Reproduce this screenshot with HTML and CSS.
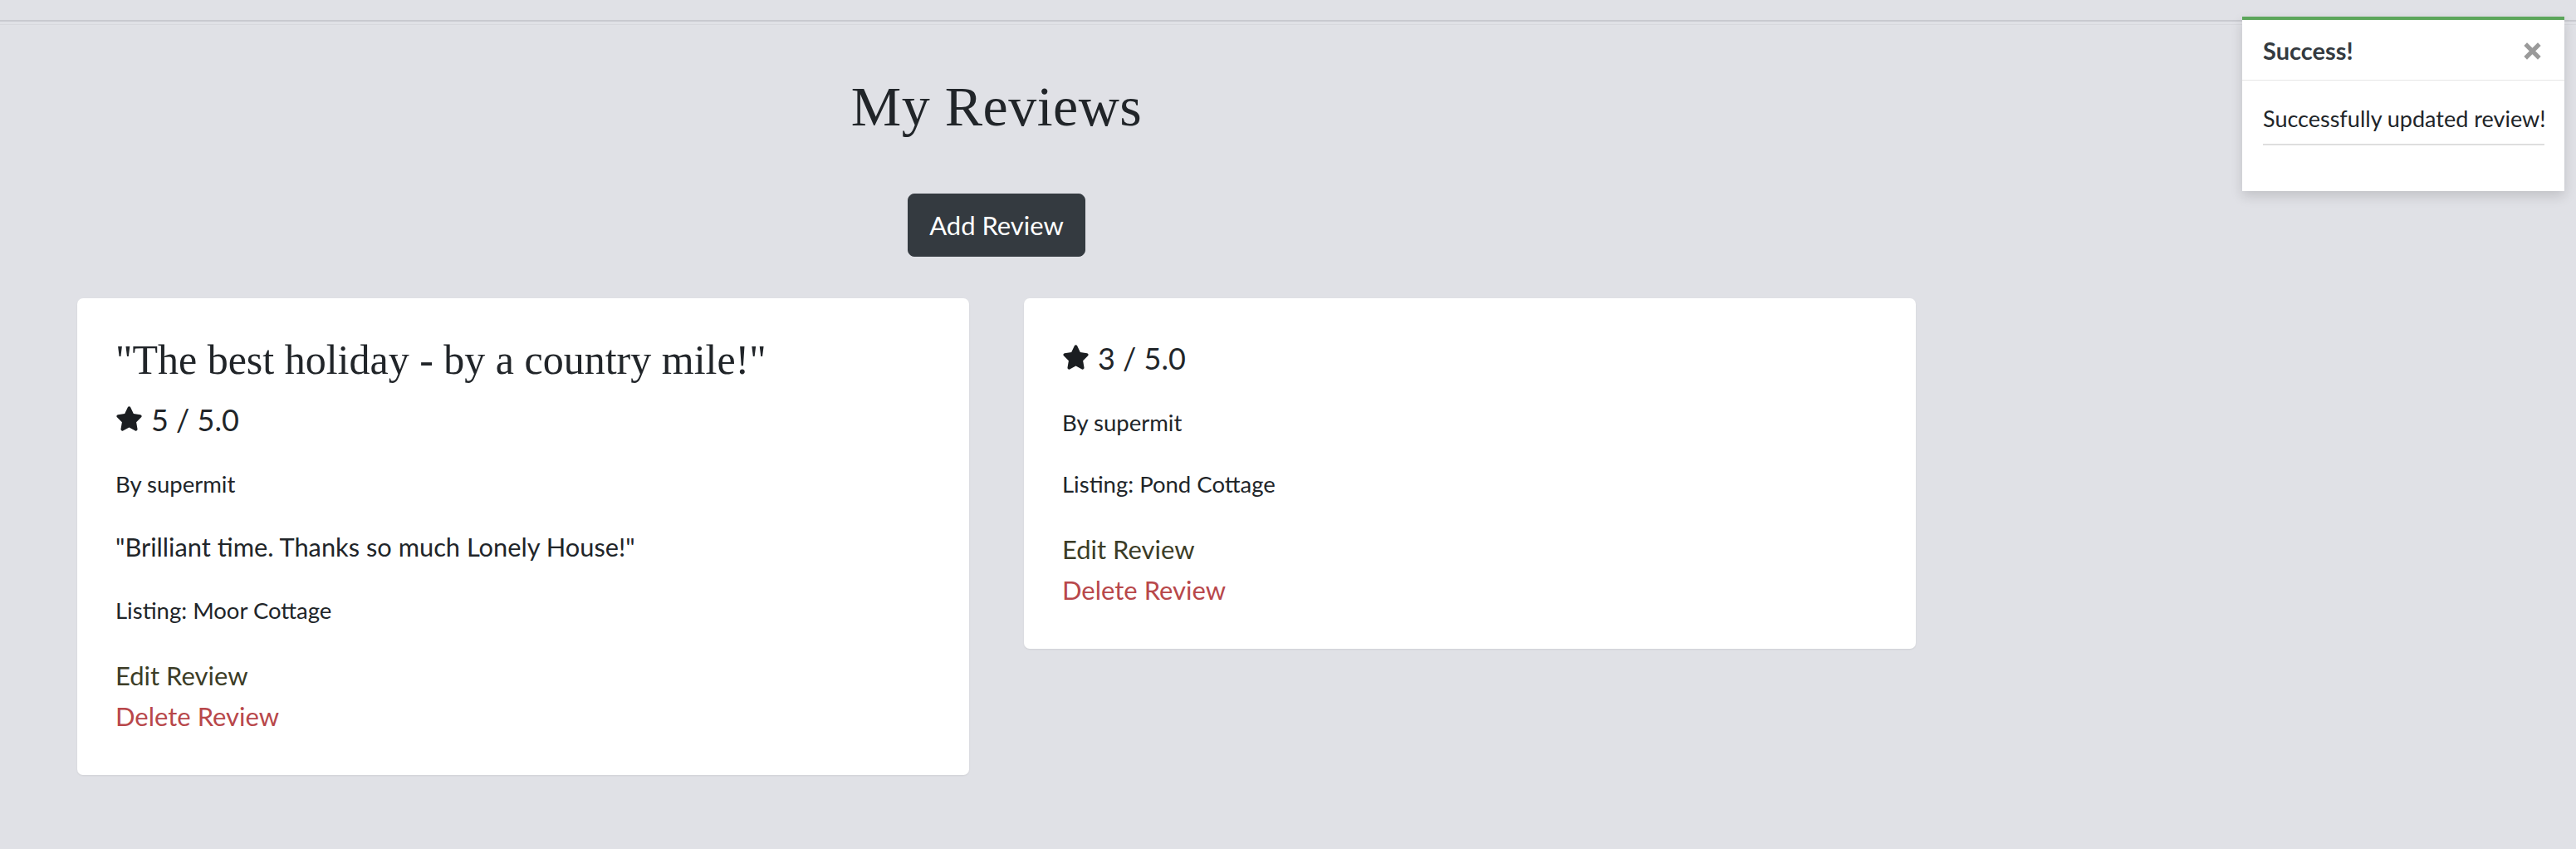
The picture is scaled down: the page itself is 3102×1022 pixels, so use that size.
FILE: index.html
```html
<!DOCTYPE html>
<html lang="en">
<head>
<meta charset="utf-8">
<title>My Reviews</title>
<link rel="stylesheet" href="styles.css">
</head>
<body>
<div class="topbar"></div>
<div class="topline"></div>

<main class="main">
  <h1 class="page-title">My Reviews</h1>
  <div class="actions">
    <a class="btn-dark" href="#">Add Review</a>
  </div>

  <div class="cards">
    <article class="card">
      <h4 class="card-title">"The best holiday - by a country mile!"</h4>
      <div class="rating">
        <svg class="star" viewBox="0 0 576 512" aria-hidden="true"><path d="M316.9 18C311.6 7 300.4 0 288.1 0s-23.4 7-28.8 18L195 150.3 51.4 171.5c-12 1.8-22 10.2-25.7 21.7s-.7 24.2 7.9 32.7L137.8 329 113.2 474.7c-2 12 3 24.2 12.9 31.3s23 8 33.8 2.3l128.3-68.5 128.3 68.5c10.8 5.7 23.9 4.9 33.8-2.3s14.9-19.3 12.9-31.3L438.5 329 542.7 225.9c8.6-8.5 11.7-21.2 7.9-32.7s-13.7-19.9-25.7-21.7L381.2 150.3 316.9 18z"/></svg>
        <span>5 / 5.0</span>
      </div>
      <p class="meta">By supermit</p>
      <p class="quote">"Brilliant time. Thanks so much Lonely House!"</p>
      <p class="meta">Listing: Moor Cottage</p>
      <div class="links">
        <a class="edit" href="#">Edit Review</a>
        <a class="delete" href="#">Delete Review</a>
      </div>
    </article>

    <article class="card">
      <div class="rating">
        <svg class="star" viewBox="0 0 576 512" aria-hidden="true"><path d="M316.9 18C311.6 7 300.4 0 288.1 0s-23.4 7-28.8 18L195 150.3 51.4 171.5c-12 1.8-22 10.2-25.7 21.7s-.7 24.2 7.9 32.7L137.8 329 113.2 474.7c-2 12 3 24.2 12.9 31.3s23 8 33.8 2.3l128.3-68.5 128.3 68.5c10.8 5.7 23.9 4.9 33.8-2.3s14.9-19.3 12.9-31.3L438.5 329 542.7 225.9c8.6-8.5 11.7-21.2 7.9-32.7s-13.7-19.9-25.7-21.7L381.2 150.3 316.9 18z"/></svg>
        <span>3 / 5.0</span>
      </div>
      <p class="meta">By supermit</p>
      <p class="meta">Listing: Pond Cottage</p>
      <div class="links">
        <a class="edit" href="#">Edit Review</a>
        <a class="delete" href="#">Delete Review</a>
      </div>
    </article>
  </div>
</main>

<div class="toast">
  <div class="toast-header">
    <strong>Success!</strong>
    <svg class="close" viewBox="0 0 24 24" aria-hidden="true"><path d="M4 4L20 20M20 4L4 20"/></svg>
  </div>
  <div class="toast-body">
    <p class="toast-text">Successfully updated review!</p>
    <div class="toast-rule"></div>
  </div>
</div>
</body>
</html>
```

FILE: styles.css
```css
html, body {
  margin: 0;
  padding: 0;
}
body {
  background: #e0e1e6;
  color: #212529;
  font-family: Lato, "Noto Sans", sans-serif;
  width: 3102px;
  min-height: 1022px;
  position: relative;
}

.topbar {
  height: 24px;
  border-bottom: 2px solid #c9cad0;
}
.topline {
  height: 1px;
  margin-top: 3px;
  background: #d7d8dd;
}

.main {
  width: 2400px;
}

.page-title {
  margin: 57px 0 0;
  font-family: "Liberation Serif", serif;
  font-weight: 400;
  font-size: 68px;
  line-height: 82px;
  text-align: center;
  letter-spacing: 0.5px;
  color: #212529;
}

.actions {
  display: flex;
  justify-content: center;
  margin-top: 64px;
}
.btn-dark {
  display: inline-block;
  background: #343a40;
  color: #fff;
  text-decoration: none;
  font-size: 31px;
  line-height: 48px;
  padding: 13px 0;
  border: 1px solid #343a40;
  border-radius: 8px;
  width: 212px;
  text-align: center;
  white-space: nowrap;
}

.cards {
  display: flex;
  align-items: flex-start;
  justify-content: center;
  gap: 66px;
  margin-top: 50px;
}
.card {
  width: 1074px;
  box-sizing: border-box;
  background: #fff;
  border-radius: 7px;
  box-shadow: 0 1px 2px rgba(0, 0, 0, 0.08);
  padding: 44px 46px 46px;
}

.card-title {
  margin: 0 0 14px;
  font-family: "Liberation Serif", serif;
  font-weight: 400;
  font-size: 50px;
  line-height: 60px;
  color: #212529;
}

.rating {
  display: flex;
  align-items: center;
  gap: 10px;
  font-size: 36px;
  line-height: 56px;
}
.star {
  width: 33px;
  height: 30px;
  fill: #1b1e21;
  margin-top: -3px;
}

.meta {
  margin: 30px 0 34px;
  font-size: 27.5px;
  line-height: 40px;
}
.meta + .meta,
.quote + .meta {
  margin-top: 0;
}
.quote {
  margin: 0 0 34px;
  font-size: 30.8px;
  line-height: 44px;
}

.links {
  display: flex;
  flex-direction: column;
  align-items: flex-start;
}
.links a {
  font-size: 31px;
  line-height: 49px;
  text-decoration: none;
}
.edit {
  color: #3c3d27;
}
.delete {
  color: #b8474a;
}

.toast {
  position: absolute;
  top: 20px;
  right: 14px;
  width: 388px;
  height: 210px;
  box-sizing: border-box;
  background: #fff;
  border-top: 4px solid #5ba55a;
  box-shadow: 0 6px 14px rgba(0, 0, 0, 0.14);
}
.toast-header {
  display: flex;
  align-items: center;
  justify-content: space-between;
  height: 72px;
  padding: 0 26px 0 25px;
  border-bottom: 1px solid #e6e6e6;
}
.toast-header strong {
  font-size: 29px;
  font-weight: 700;
  color: #343a40;
  margin-top: 0;
}
.close {
  width: 25px;
  height: 25px;
  stroke: #9a9a9a;
  stroke-width: 5;
  fill: none;
  margin-top: 2px;
}
.toast-body {
  padding: 0 24px 0 25px;
}
.toast-text {
  margin: 26px 0 0;
  font-size: 27px;
  line-height: 40px;
  color: #212529;
  white-space: nowrap;
}
.toast-rule {
  height: 2px;
  background: #dedede;
  margin-top: 10px;
}
```
